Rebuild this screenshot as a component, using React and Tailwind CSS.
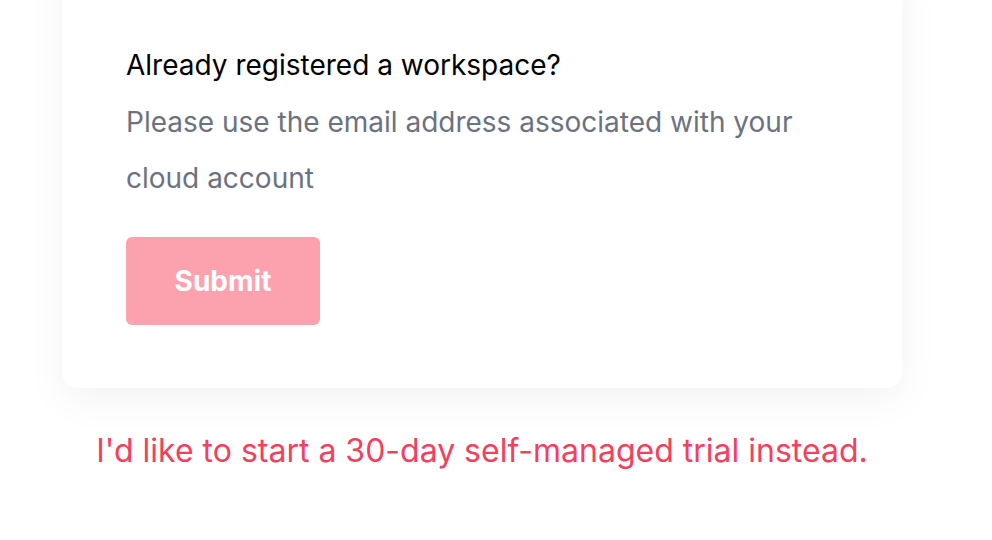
export default function App() {
  return (
    <div className="min-h-[540px] w-full overflow-hidden bg-white font-['Inter',sans-serif]">
      <div className="ml-[62px] w-[840px] -mt-[40px]">
        {/* Card */}
        <div className="rounded-2xl bg-white px-16 pt-[87px] pb-[63px] shadow-[0_12px_40px_rgba(0,0,0,0.05)]">
          <h3 className="text-[28px] leading-[36px] text-black">Already registered a workspace?</h3>
          <p className="mt-[11px] text-[28px] leading-[56px] text-[#6b7280]">
            Please use the email address associated with your
            <br />
            cloud account
          </p>
          <button className="mt-[31px] h-[88px] w-[194px] rounded-md bg-[#fba2ae] text-[28px] font-bold text-white">
            Submit
          </button>
        </div>

        {/* Trial link */}
        <div className="mt-[43px] text-center">
          <a href="#" className="text-[32px] leading-[40px] text-[#f43f5e]">
            I'd like to start a 30-day self-managed trial instead.
          </a>
        </div>
      </div>
    </div>
  );
}
